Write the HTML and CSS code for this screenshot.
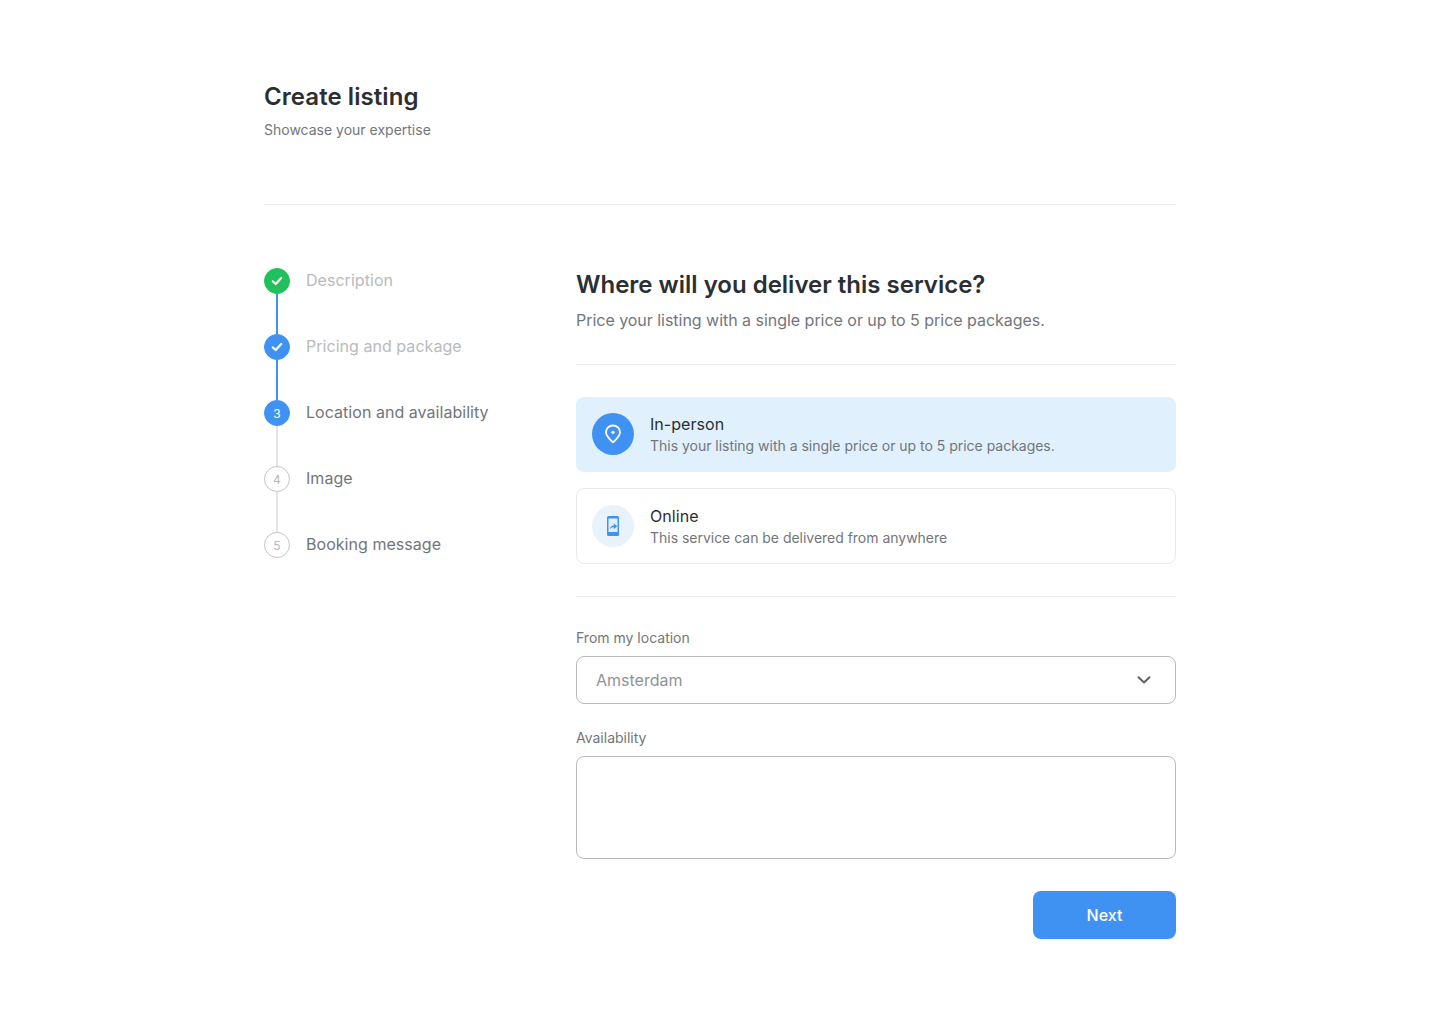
FILE: index.html
```html
<!DOCTYPE html>
<html lang="en">
<head>
  <meta charset="UTF-8" />
  <title>Create listing</title>
  <link rel="stylesheet" href="styles.css">
</head>
<body>
<div class="page">
  <header class="page-head">
    <h1>Create listing</h1>
    <p>Showcase your expertise</p>
  </header>

  <div class="columns">
    <ol class="steps">
      <li class="step done-green">
        <div class="marker">
          <span class="dot"><svg width="14" height="14" viewBox="0 0 14 14"><path d="M2.800 7.400 5.700 10 11.200 4" fill="none" stroke="#fff" stroke-width="2.200" stroke-linecap="round" stroke-linejoin="round"/></svg></span>
          <span class="line"></span>
        </div>
        <span class="step-name">Description</span>
      </li>
      <li class="step done">
        <div class="marker">
          <span class="dot"><svg width="14" height="14" viewBox="0 0 14 14"><path d="M2.800 7.400 5.700 10 11.200 4" fill="none" stroke="#fff" stroke-width="2.200" stroke-linecap="round" stroke-linejoin="round"/></svg></span>
          <span class="line"></span>
        </div>
        <span class="step-name">Pricing and package</span>
      </li>
      <li class="step current">
        <div class="marker">
          <span class="dot">3</span>
          <span class="line"></span>
        </div>
        <span class="step-name">Location and availability</span>
      </li>
      <li class="step">
        <div class="marker">
          <span class="dot">4</span>
          <span class="line"></span>
        </div>
        <span class="step-name">Image</span>
      </li>
      <li class="step">
        <div class="marker">
          <span class="dot">5</span>
        </div>
        <span class="step-name">Booking message</span>
      </li>
    </ol>

    <main class="form">
      <div class="form-head">
        <h2>Where will you deliver this service?</h2>
        <p>Price your listing with a single price or up to 5 price packages.</p>
      </div>

      <div class="options">
        <div class="option selected">
          <span class="option-icon">
            <svg width="18" height="20" viewBox="0 0 18 20"><path d="M9 1.500C5.100 1.500 2 4.500 2 8.300c0 3.400 3.500 7 7 10.100 3.500-3.100 7-6.700 7-10.100 0-3.800-3.100-6.800-7-6.800Z" fill="none" stroke="#fff" stroke-width="1.800" stroke-linejoin="round"/><circle cx="9" cy="8.300" r="1.600" fill="#fff"/></svg>
          </span>
          <div>
            <div class="option-title">In-person</div>
            <div class="option-text">This your listing with a single price or up to 5 price packages.</div>
          </div>
        </div>
        <div class="option">
          <span class="option-icon">
            <svg width="14" height="20" viewBox="0 0 14 20"><rect x="1" y="0" width="12" height="20" rx="1.500" fill="#3f92f2"/><rect x="2.500" y="2.500" width="9" height="13.500" fill="#e3f0fc"/><path d="M3.800 13.400c.4-2.600 1.800-4 4-4V7.200l3.400 3.100-3.400 3v-2c-1.700 0-3 .6-4 2.100Z" fill="#3f92f2"/></svg>
          </span>
          <div>
            <div class="option-title">Online</div>
            <div class="option-text">This service can be delivered from anywhere</div>
          </div>
        </div>
      </div>

      <div class="fields">
        <label class="field-label">From my location</label>
        <div class="select">
          <span>Amsterdam</span>
          <svg width="16" height="16" viewBox="0 0 16 16"><path d="M2.500 5.200 8 10.500l5.500-5.300" fill="none" stroke="#5f6368" stroke-width="2" stroke-linecap="round" stroke-linejoin="round"/></svg>
        </div>
        <label class="field-label second">Availability</label>
        <div class="textarea"></div>
      </div>

      <div class="actions">
        <button class="next">Next</button>
      </div>
    </main>
  </div>
</div>
</body>
</html>
```

FILE: styles.css
```css
* {
  margin: 0;
  padding: 0;
  box-sizing: border-box;
}
body {
  background: #fff;
  font-family: Inter, "Liberation Sans", sans-serif;
  color: #2b2f33;
}
.page {
  width: 912px;
  margin: 0 auto;
  padding-top: 82px;
}
.page-head {
  height: 123px;
  border-bottom: 1px solid #e9eaec;
}
.page-head h1 {
  font-size: 24px;
  line-height: 30px;
  font-weight: 600;
  letter-spacing: 0.07px;
  color: #2b2f33;
}
.page-head p {
  margin-top: 9px;
  font-size: 14px;
  line-height: 17px;
  color: #72767b;
}
.columns {
  display: flex;
  padding-top: 63px;
}
.steps {
  list-style: none;
  width: 312px;
  flex-shrink: 0;
}
.step {
  display: flex;
  gap: 16px;
  height: 66px;
}
.marker {
  width: 26px;
  display: flex;
  flex-direction: column;
  align-items: center;
}
.dot {
  width: 26px;
  height: 26px;
  flex-shrink: 0;
  border-radius: 50%;
  border: 1px solid #c4c6c9;
  background: #fff;
  display: flex;
  align-items: center;
  justify-content: center;
  font-size: 12px;
  color: #b4b7ba;
}
.line {
  width: 2px;
  height: 40px;
  background: #e3e4e6;
}
.step-name {
  font-size: 16px;
  line-height: 24px;
  letter-spacing: 0.04px;
  color: #72767b;
}
.done-green .dot {
  background: #22c05c;
  border-color: #22c05c;
}
.done .dot,
.current .dot {
  background: #3f92f2;
  border-color: #3f92f2;
  color: #fff;
}
.done-green .line,
.done .line {
  background: #3f92f2;
}
.done-green .step-name,
.done .step-name {
  color: #b8babd;
}
.form {
  width: 600px;
}
.form-head {
  height: 95px;
  border-bottom: 1px solid #e9eaec;
}
.form-head h2 {
  font-size: 24px;
  line-height: 30px;
  font-weight: 600;
  color: #2b2f33;
  margin-top: 2px;
}
.form-head p {
  margin-top: 10px;
  font-size: 16px;
  line-height: 20px;
  letter-spacing: -0.03px;
  color: #72767b;
}
.options {
  display: flex;
  flex-direction: column;
  gap: 16px;
  padding: 32px 0;
  border-bottom: 1px solid #e9eaec;
}
.option {
  display: flex;
  align-items: center;
  gap: 16px;
  height: 76px;
  padding: 0 15px;
  border: 1px solid #e9eaec;
  border-radius: 8px;
}
.option.selected {
  height: 75px;
  background: #e1f0fd;
  border-color: #e1f0fd;
}
.option-icon {
  width: 42px;
  height: 42px;
  border-radius: 50%;
  background: #e8f2fb;
  display: flex;
  align-items: center;
  justify-content: center;
  flex-shrink: 0;
}
.selected .option-icon {
  background: #3f92f2;
  margin-bottom: 1px;
}
.option-title {
  font-size: 16px;
  line-height: 22px;
  margin-bottom: 1px;
  letter-spacing: 0.05px;
  color: #2b2f33;
}
.option-text {
  font-size: 14px;
  line-height: 20px;
  letter-spacing: -0.02px;
  color: #72767b;
}
.fields {
  padding-top: 32px;
}
.field-label {
  display: block;
  font-size: 14px;
  line-height: 18px;
  color: #72767b;
}
.field-label.second {
  margin-top: 25px;
}
.select {
  margin-top: 9px;
  height: 48px;
  padding: 0 23px 0 19px;
  border: 1px solid #b9bbbe;
  border-radius: 8px;
  display: flex;
  align-items: center;
  justify-content: space-between;
  font-size: 16px;
  color: #8f9397;
}
.textarea {
  margin-top: 9px;
  height: 103px;
  border: 1px solid #b9bbbe;
  border-radius: 8px;
}
.actions {
  display: flex;
  justify-content: flex-end;
  padding-top: 32px;
}
.next {
  width: 143px;
  height: 48px;
  border: none;
  border-radius: 8px;
  background: #3f92f2;
  color: #fff;
  font-family: inherit;
  font-size: 16px;
  font-weight: 500;
  cursor: pointer;
}
```
